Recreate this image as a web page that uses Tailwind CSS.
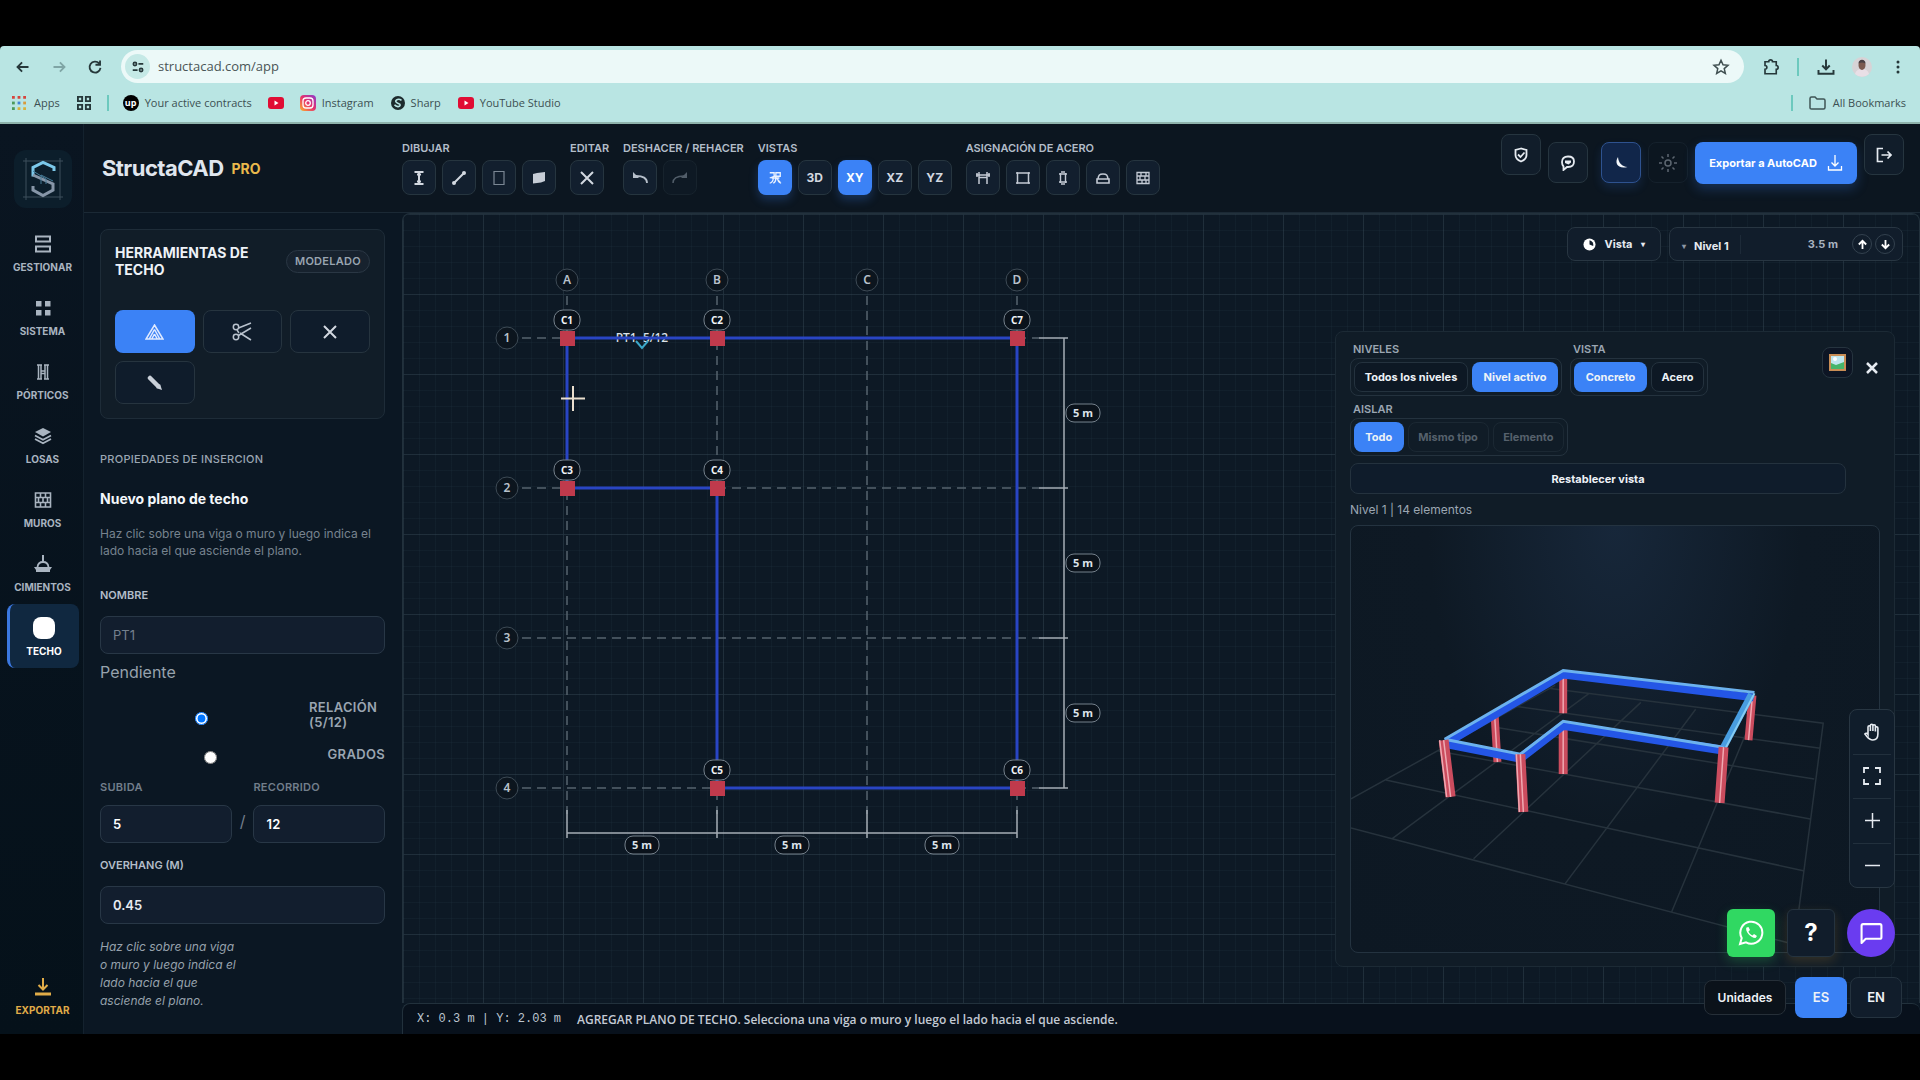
<!DOCTYPE html>
<html lang="es">
<head>
    <meta charset="UTF-8">
    <meta name="viewport" content="width=device-width, initial-scale=1.0">
    <title>StructaCAD PRO</title>
    <script src="https://cdn.jsdelivr.net/npm/@tailwindcss/browser@4"></script>
</head>
<body class="flex flex-col h-screen py-[46px] bg-black overflow-hidden font-['Inter',sans-serif] text-[#c3cad4]">

    <!-- Browser bar -->
    <div class="shrink-0 h-[78px] bg-[#b9e5e3] border-b-2 border-[#8fb3ac] rounded-t-sm text-[#3c5052] font-['Open_Sans',sans-serif]">
        <div class="flex items-center h-[41px] pl-3 pr-3">
            <div class="flex items-center gap-[14px] w-[109px] text-[#26383a]">
                <button aria-label="Atrás"><svg class="size-[22px]" viewBox="0 0 24 24" fill="none" stroke="currentColor" stroke-width="2"><path d="M18 12H6M11 7l-5 5 5 5"/></svg></button>
                <button aria-label="Adelante" class="text-[#7fa5a5]"><svg class="size-[22px]" viewBox="0 0 24 24" fill="none" stroke="currentColor" stroke-width="2"><path d="M6 12h12M13 7l5 5-5 5"/></svg></button>
                <button aria-label="Recargar"><svg class="size-[22px]" viewBox="0 0 24 24" fill="none" stroke="currentColor" stroke-width="2"><path d="M16.500 8A6 6 0 1 0 18 13M17.500 5v4.500h-5"/></svg></button>
            </div>
            <div class="flex flex-1 items-center h-[33px] rounded-full bg-[#ecf9f8] pl-1 pr-[14px]">
                <span class="flex items-center justify-center size-[25px] rounded-full bg-[#c5e9e6] text-[#26383a]">
                    <svg class="size-[14px]" viewBox="0 0 16 16" fill="none" stroke="currentColor" stroke-width="2"><circle cx="4.500" cy="4.500" r="1.800"/><path d="M8.500 4.500H14M2 11.500h5.500"/><circle cx="11.500" cy="11.500" r="1.800"/></svg>
                </span>
                <input aria-label="Dirección" value="structacad.com/app" class="flex-1 ml-2 bg-transparent outline-none text-[13px] text-[#4a5556]">
                <svg class="size-[18px]" viewBox="0 0 24 24" fill="none" stroke="#3f4f50" stroke-width="2"><path d="m12 3 2.700 6.100 6.600.6-5 4.400 1.500 6.500L12 17.200l-5.800 3.400 1.500-6.500-5-4.400 6.600-.6z"/></svg>
            </div>
            <div class="flex items-center ml-[18px] text-[#26383a]">
                <svg class="size-[18px]" viewBox="0 0 24 24" fill="none" stroke="currentColor" stroke-width="2.200"><path d="M4 5h5a2.500 2.500 0 0 1 5 0h5v5a2.500 2.500 0 0 1 0 5v6H4v-6a2.500 2.500 0 0 0 0-5z"/></svg>
                <span class="w-[2px] h-[18px] ml-[17px] mr-[18px] bg-[#6cc9be]"></span>
                <svg class="size-[18px]" viewBox="0 0 24 24" fill="none" stroke="currentColor" stroke-width="2.600"><path d="M12 2v13M7 10l5 5 5-5M2 16v5h20v-5"/></svg>
                <svg class="size-5 ml-[17px]" viewBox="0 0 20 20"><circle cx="10" cy="10" r="10" fill="#d7d3d6"/><path d="M3 17c1-4 4-5 7-5s6 1 7 5a10 10 0 0 1-14 0z" fill="#e9dfe6"/><ellipse cx="10" cy="8" rx="3.500" ry="5" fill="#7c5a50"/><path d="M6.500 6.500c0-5 7-5 7 0-2-1.500-5-1.500-7 0z" fill="#4a4044"/></svg>
                <button aria-label="Menú" class="ml-4"><svg class="size-5" viewBox="0 0 20 20" fill="currentColor"><circle cx="10" cy="5" r="1.500"/><circle cx="10" cy="10" r="1.500"/><circle cx="10" cy="15" r="1.500"/></svg></button>
            </div>
        </div>
        <div class="flex items-center h-8 pl-3 pr-[14px] text-[11px]">
            <svg class="size-[14px]" viewBox="0 0 15 15"><g fill="#d6453d"><path d="M0 0h3v3H0zM6 0h3v3H6zM12 0h3v3h-3z"/></g><path d="M0 6h3v3H0z" fill="#4b9a5b"/><path d="M6 6h3v3H6z" fill="#4284d8"/><path d="M12 6h3v3h-3z" fill="#d89b3c"/><path d="M0 12h3v3H0z" fill="#4b9a5b"/><path d="M6 12h3v3H6zM12 12h3v3h-3z" fill="#d8b23c"/></svg>
            <a href="#" class="ml-2">Apps</a>
            <svg class="size-[14px] ml-[17px]" viewBox="0 0 15 15" fill="none" stroke="#26383a" stroke-width="2"><path d="M1 1h4.500v4.500H1zM9.500 1H14v4.500H9.500zM1 9.500h4.500V14H1zM9.500 9.500H14V14H9.500z"/></svg>
            <span class="w-[2px] h-4 ml-4 mr-[14px] bg-[#6cc9be]"></span>
            <span class="flex items-center justify-center size-4 rounded-full bg-black text-white text-[9px] font-bold">up</span>
            <a href="#" class="ml-[6px]">Your active contracts</a>
            <svg class="w-4 h-3 ml-4" viewBox="0 0 16 12"><rect width="16" height="12" rx="3" fill="#e00d34"/><path d="m6.500 3.500 4 2.500-4 2.500z" fill="#fff"/></svg>
            <svg class="size-4 ml-4" viewBox="0 0 16 16"><defs><linearGradient id="ig" x1="0" y1="1" x2="1" y2="0"><stop offset="0" stop-color="#fdb52a"/><stop offset=".5" stop-color="#e6316c"/><stop offset="1" stop-color="#8a3bd0"/></linearGradient></defs><rect width="16" height="16" rx="4" fill="url(#ig)"/><g fill="none" stroke="#fff" stroke-width="1.300"><rect x="3" y="3" width="10" height="10" rx="3"/><circle cx="8" cy="8" r="2.300"/></g></svg>
            <a href="#" class="ml-[6px]">Instagram</a>
            <svg class="size-[14px] ml-[17px]" viewBox="0 0 16 16"><circle cx="8" cy="8" r="8" fill="#1d2b2d"/><path d="M12 5C9 2.500 5 4 5.500 6.500S11 8 10.500 10.500 6 12.500 4 10" fill="none" stroke="#b9e5e3" stroke-width="1.800"/></svg>
            <a href="#" class="ml-[6px]">Sharp</a>
            <svg class="w-4 h-3 ml-[17px]" viewBox="0 0 16 12"><rect width="16" height="12" rx="3" fill="#e00d34"/><path d="m6.500 3.500 4 2.500-4 2.500z" fill="#fff"/></svg>
            <a href="#" class="ml-[6px]">YouTube Studio</a>
            <span class="w-[2px] h-4 ml-auto mr-4 bg-[#6cc9be]"></span>
            <svg class="w-[17px] h-[14px]" viewBox="0 0 17 14" fill="none" stroke="#3f5556" stroke-width="1.500"><path d="M1 12V2.500Q1 1 2.500 1H6l2 2h6.500Q16 3 16 4.500v7Q16 13 14.500 13h-12Q1 13 1 12z"/></svg>
            <a href="#" class="ml-[7px]">All Bookmarks</a>
        </div>
    </div>

    <div class="flex flex-1 min-h-0 bg-[#0b1723]">

        <!-- Left navigation -->
        <nav class="flex flex-col items-center shrink-0 w-[84px] pt-[26px] pb-4 pl-[2px] border-r border-[#14222e] bg-linear-to-b from-[#0a1521] to-[#05111a] text-[10px] leading-4 font-bold text-[#a9b4c0]">
            <div class="flex items-center justify-center w-[58px] h-[58px] rounded-xl bg-[#0c1e2b]">
                <svg class="w-10 h-[42px]" viewBox="0 0 40 42" fill="none"><path d="M3 0v42M37 0v42M0 3h40M0 39h40" stroke="#3c4f5d"/><path d="M31 13V9.500L20 4.500 10 9.500v9" stroke="#7cc8ea" stroke-width="3"/><path d="m10 17 20 9v6l-10 5.500L10 32v-4" stroke="#8796a8" stroke-width="3"/><path d="m10 13 13 8v5M18 26v-9l12 6" stroke="#467b97"/></svg>
            </div>
            <div class="flex flex-col mt-3 w-[72px]">
                <a href="#" class="flex flex-col items-center gap-[6px] h-16 pt-[15px]">
                    <svg class="size-[18px]" viewBox="0 0 18 18" fill="none" stroke="currentColor" stroke-width="2"><path d="M2 1.500h14v5H2zM2 11.500h14v5H2z"/></svg>
                    GESTIONAR
                </a>
                <a href="#" class="flex flex-col items-center gap-[6px] h-16 pt-[15px]">
                    <svg class="size-[18px]" viewBox="0 0 18 18" fill="currentColor"><path d="M2 2h5.500v5.500H2zM11 2h5.500v5.500H11zM2 11h5.500v5.500H2zM11 11h5.500v5.500H11z"/></svg>
                    SISTEMA
                </a>
                <a href="#" class="flex flex-col items-center gap-[6px] h-16 pt-[15px]">
                    <svg class="size-[18px]" viewBox="0 0 18 18" fill="none" stroke="currentColor" stroke-width="1.500"><path d="M3 2h5M3 16h5M10 2h5M10 16h5M4.500 2v14M7 2v14M11 2v14M13.500 2v14M7 8h4M7 10.500h4"/></svg>
                    PÓRTICOS
                </a>
                <a href="#" class="flex flex-col items-center gap-[6px] h-16 pt-[15px]">
                    <svg class="size-[18px]" viewBox="0 0 18 18" fill="none" stroke="currentColor" stroke-width="1.800"><path d="m9 1 8 4-8 4.500L1 5z" fill="currentColor" stroke="none"/><path d="m1 8.500 8 4.200 8-4.200M1 12l8 4.200 8-4.200"/></svg>
                    LOSAS
                </a>
                <a href="#" class="flex flex-col items-center gap-[6px] h-16 pt-[15px]">
                    <svg class="size-[18px]" viewBox="0 0 18 18" fill="none" stroke="currentColor" stroke-width="1.600"><path d="M1.500 2h15v14h-15zM1.500 6.500h15M1.500 11.500h15M6.500 2v4.500M11.500 2v4.500M4.500 6.500v5M9 6.500v5M13.500 6.500v5M6.500 11.500V16M11.500 11.500V16"/></svg>
                    MUROS
                </a>
                <a href="#" class="flex flex-col items-center gap-[6px] h-16 pt-[15px]">
                    <svg class="size-[18px]" viewBox="0 0 18 18"><path d="M9 0v7" stroke="currentColor" stroke-width="2"/><path d="M3.500 12c.5-4 2.500-5 5.500-5s5 1 5.500 5" stroke="currentColor" stroke-width="1.800" fill="none"/><path d="M0 12h18l-2 3v2H2v-2z" fill="currentColor"/></svg>
                    CIMIENTOS
                </a>
                <a href="#" class="flex flex-col items-center gap-1 h-16 pt-[13px] rounded-lg border-l-3 border-[#3b78e0] bg-[#102840] text-white">
                    <span class="size-[22px] rounded-lg bg-white"></span>
                    TECHO
                </a>
            </div>
            <a href="#" class="flex flex-col items-center gap-[6px] mt-auto text-[#e0ac48]">
                <svg class="size-[18px]" viewBox="0 0 18 18" fill="none" stroke="currentColor" stroke-width="2"><path d="M9 0v11M4.500 7 9 11.500 13.500 7"/><path d="M1 16h16" stroke-width="3"/></svg>
                EXPORTAR
            </a>
        </nav>

        <div class="flex flex-col flex-1 min-w-0">

            <!-- Header -->
            <header class="flex shrink-0 h-[89px] pl-[18px] pr-4 bg-[#0c1620] border-b border-[#1b2935]">
                <div class="flex items-center gap-2 w-[300px] pt-px">
                    <h1 class="text-[22px] font-bold tracking-tight text-[#e0e6ee]">StructaCAD</h1>
                    <span class="text-sm font-bold text-[#eab94c]">PRO</span>
                </div>

                <div class="flex gap-[14px] pt-4 text-[11px] leading-4 font-semibold text-[#b3bdc9]">
                    <div class="flex flex-col gap-1">
                        <span>DIBUJAR</span>
                        <div class="flex gap-[6px]">
                            <button aria-label="Columna" class="flex items-center justify-center w-[34px] h-[35px] rounded-lg border border-[#26353f] bg-[#121f2e]"><svg class="size-4" viewBox="0 0 16 16" fill="none" stroke="#d2d8e0" stroke-width="2"><path d="M3.500 2h9M3.500 14h9M8 2v12M6 4.500h4M6 11.500h4"/></svg></button>
                            <button aria-label="Viga" class="flex items-center justify-center w-[34px] h-[35px] rounded-lg border border-[#26353f] bg-[#121f2e]"><svg class="size-4" viewBox="0 0 16 16" stroke="#d2d8e0" fill="#d2d8e0" stroke-width="2"><path d="M3 13 13 3"/><circle cx="3" cy="13" r="1"/><circle cx="13" cy="3" r="1"/></svg></button>
                            <button aria-label="Muro" class="flex items-center justify-center w-[34px] h-[35px] rounded-lg border border-[#26353f] bg-[#121f2e]"><svg class="size-4" viewBox="0 0 16 16" fill="none" stroke="#7b8794" stroke-width="1.200"><path d="M3 1.500h10v13H3z"/></svg></button>
                            <button aria-label="Losa" class="flex items-center justify-center w-[34px] h-[35px] rounded-lg border border-[#26353f] bg-[#121f2e]"><svg class="size-4" viewBox="0 0 16 16" fill="#c6cdd6"><path d="m2 4 4-1 8-1v9l-4 1.500-8 1z"/></svg></button>
                        </div>
                    </div>
                    <div class="flex flex-col gap-1 w-[39px]">
                        <span>EDITAR</span>
                        <button aria-label="Borrar" class="flex items-center justify-center w-[34px] h-[35px] rounded-lg border border-[#26353f] bg-[#121f2e]"><svg class="size-4" viewBox="0 0 16 16" stroke="#d2d8e0" stroke-width="2"><path d="m2 2 12 12M14 2 2 14"/></svg></button>
                    </div>
                    <div class="flex flex-col gap-1">
                        <span>DESHACER / REHACER</span>
                        <div class="flex gap-[6px]">
                            <button aria-label="Deshacer" class="flex items-center justify-center w-[34px] h-[35px] rounded-lg border border-[#26353f] bg-[#121f2e]"><svg class="size-4" viewBox="0 0 16 16" fill="none" stroke="#b6bfca" stroke-width="1.800"><path d="M15 13c0-5-4-7-11-7"/><path d="M1 2v6h6z" fill="#b6bfca" stroke="none"/></svg></button>
                            <button aria-label="Rehacer" disabled class="flex items-center justify-center w-[34px] h-[35px] rounded-lg border border-[#17232d] bg-[#0e1924]"><svg class="size-4" viewBox="0 0 16 16" fill="none" stroke="#515d69" stroke-width="1.500"><path d="M1 13c0-5 4-7 11-7"/><path d="M15 2v6H9z" fill="#515d69" stroke="none"/></svg></button>
                        </div>
                    </div>
                    <div class="flex flex-col gap-1">
                        <span>VISTAS</span>
                        <div class="flex gap-[6px] text-xs font-bold text-[#d2d8e0]">
                            <button aria-label="Vista libre" class="flex items-center justify-center w-[34px] h-[35px] rounded-lg bg-[#3b82f6] shadow-[0_5px_10px_#3b82f640]"><svg class="size-[14px]" viewBox="0 0 16 16" fill="none" stroke="#e8f1ff" stroke-width="1.500"><path d="M2 2h5v4L2 8M9 1v7M9 2h5v4H9M7 5l7 8M4 8h9M6 8c0 3-1 5-4 6M9 8c0 3-1 5-3 6M11 8c0 3 1 5 4 6"/></svg></button>
                            <button class="flex items-center justify-center w-[34px] h-[35px] rounded-lg border border-[#26353f] bg-[#121f2e]">3D</button>
                            <button class="flex items-center justify-center w-[34px] h-[35px] rounded-lg bg-[#3b82f6] text-white shadow-[0_5px_10px_#3b82f640]">XY</button>
                            <button class="flex items-center justify-center w-[34px] h-[35px] rounded-lg border border-[#26353f] bg-[#121f2e]">XZ</button>
                            <button class="flex items-center justify-center w-[34px] h-[35px] rounded-lg border border-[#26353f] bg-[#121f2e]">YZ</button>
                        </div>
                    </div>
                    <div class="flex flex-col gap-1">
                        <span>ASIGNACIÓN DE ACERO</span>
                        <div class="flex gap-[6px] text-[#c3cad4]">
                            <button aria-label="Acero en vigas" class="flex items-center justify-center w-[34px] h-[35px] rounded-lg border border-[#26353f] bg-[#121f2e]"><svg class="size-[14px]" viewBox="0 0 14 14" fill="none" stroke="currentColor" stroke-width="1.500"><path d="M0 4h14M3 1v12M11 1v12M3 6.500h8M1 2v4M13 2v4"/></svg></button>
                            <button aria-label="Acero en secciones" class="flex items-center justify-center w-[34px] h-[35px] rounded-lg border border-[#26353f] bg-[#121f2e]"><svg class="size-[14px]" viewBox="0 0 14 14" fill="none" stroke="currentColor" stroke-width="1.500"><path d="M1.500 2h11v10h-11z"/><path d="M0 2h2M12 2h2M0 12h2M12 12h2"/></svg></button>
                            <button aria-label="Acero en columnas" class="flex items-center justify-center w-[34px] h-[35px] rounded-lg border border-[#26353f] bg-[#121f2e]"><svg class="size-[14px]" viewBox="0 0 14 14" fill="none" stroke="currentColor" stroke-width="1.400"><path d="M4.500 2v10M9.500 2v10M3 3h8M3 11h8M5 1h4M5 13h4"/></svg></button>
                            <button aria-label="Acero en zapatas" class="flex items-center justify-center w-[34px] h-[35px] rounded-lg border border-[#26353f] bg-[#121f2e]"><svg class="size-[14px]" viewBox="0 0 14 14" fill="none" stroke="currentColor" stroke-width="1.600"><path d="M2 8c.5-4 1.500-5 5-5s4.500 1 5 5"/><path d="M1 8h12v4H1z"/></svg></button>
                            <button aria-label="Acero en muros" class="flex items-center justify-center w-[34px] h-[35px] rounded-lg border border-[#26353f] bg-[#121f2e]"><svg class="size-[14px]" viewBox="0 0 14 14" fill="none" stroke="currentColor" stroke-width="1.300"><path d="M1 1.500h12v11H1zM1 5h12M1 9h12M5 1.500V5M9 5v4M4 5v4M6 9v3.500M10 9v3.500M10 1.500V5"/></svg></button>
                        </div>
                    </div>
                </div>

                <div class="flex items-start gap-[7px] pt-[10px] ml-auto text-[#e6ebf1]">
                    <button aria-label="Seguridad" class="flex items-center justify-center w-10 h-[41px] rounded-lg border border-[#26353f] bg-[#111d2a]"><svg class="size-4" viewBox="0 0 16 16" fill="none" stroke="currentColor" stroke-width="1.800"><path d="M8 1.500 2.500 3v5c0 3.500 3 5.500 5.500 6.500 2.500-1 5.500-3 5.500-6.500V3z"/><path d="m5 7.500 2.500 2.500 4-4.500"/></svg></button>
                    <button aria-label="Comentarios" class="flex items-center justify-center w-10 h-[41px] mt-2 rounded-lg border border-[#26353f] bg-[#111d2a]"><svg class="size-4" viewBox="0 0 16 16" fill="none" stroke="currentColor" stroke-width="1.800"><path d="M3.500 15v-3.500C2.500 10.500 2 9 2 7c0-3.500 2-5.500 6-5.500s6 2 6 5-2 5.500-6 5.500H7z"/><path d="M5 5.500h6v2L8.500 9.500 5 8z" fill="currentColor" stroke="none"/></svg></button>
                    <button aria-label="Modo oscuro" class="flex items-center justify-center w-10 h-[41px] mt-2 ml-[6px] rounded-lg border border-[#2e528f] bg-[#11264a] shadow-[0_5px_10px_#3b82f626]"><svg class="size-4" viewBox="0 0 16 16" fill="#f4f7fb"><path d="M5 2C1 8 5 14.500 14.500 12 9 11.500 5.500 8 5 2z"/></svg></button>
                    <button aria-label="Modo claro" class="flex items-center justify-center w-10 h-[41px] mt-2 rounded-lg border border-[#15212c] text-[#5d6771]"><svg class="size-[18px]" viewBox="0 0 18 18" fill="none" stroke="currentColor" stroke-width="1.500"><circle cx="9" cy="9" r="3"/><path d="M9 0v3M9 15v3M0 9h3M15 9h3M2.500 2.500l2 2M13.500 13.500l2 2M15.500 2.500l-2 2M4.500 13.500l-2 2"/></svg></button>
                    <button class="flex items-center justify-center gap-[10px] w-[162px] h-[42px] mt-2 rounded-lg bg-[#3b82f6] text-[11px] font-bold text-white shadow-[0_5px_12px_#3b82f640]">Exportar a AutoCAD
                        <svg class="size-4" viewBox="0 0 16 16" fill="none" stroke="currentColor" stroke-width="1.300"><path d="M8 0v11M4.500 7.500 8 11l3.500-3.500M1.500 11v4h13v-4"/></svg>
                    </button>
                    <button aria-label="Salir" class="flex items-center justify-center w-10 h-[41px] rounded-lg border border-[#26353f] bg-[#111d2a]"><svg class="size-4" viewBox="0 0 16 16" fill="none" stroke="currentColor" stroke-width="1.700"><path d="M7 1.500H1.500v13H7M5.500 8H15M11.500 4.500 15 8l-3.500 3.500"/></svg></button>
                </div>
            </header>

            <div class="flex flex-1 min-h-0">

                <!-- Roof properties -->
                <aside class="flex flex-col shrink-0 w-[318px] pt-4 pl-4 pr-[17px] text-xs">
                    <section class="h-[190px] rounded-lg border border-[#1e2c38] bg-[#111d28] p-[14px]">
                        <div class="flex items-center justify-between">
                            <h2 class="w-[150px] text-sm leading-[17px] font-bold text-[#eef2f7]">HERRAMIENTAS DE TECHO</h2>
                            <span class="flex items-center h-[23px] px-2 rounded-full border border-[#2a3744] bg-[#17222e] text-[11px] font-semibold tracking-wide text-[#9aa5b1]">MODELADO</span>
                        </div>
                        <div class="grid grid-cols-3 gap-2 mt-8">
                            <button aria-label="Plano de techo" class="flex items-center justify-center h-[43px] rounded-lg bg-[#3b82f6]"><svg class="w-[19px] h-4" viewBox="0 0 19 16" fill="none" stroke="#dfeaff" stroke-width="1.500"><path d="M9.500 1 18 15H1zM9.500 5.500l5 9M9.500 5.500l-5 9M9.500 10 12 14.500M9.500 10 7 14.500"/></svg></button>
                            <button aria-label="Recortar" class="flex items-center justify-center h-[43px] rounded-lg border border-[#26343f] bg-[#0f1c2b]"><svg class="size-5" viewBox="0 0 20 20" fill="none" stroke="#b9c2cd" stroke-width="1.500"><circle cx="4" cy="5" r="2.700"/><circle cx="4" cy="15" r="2.700"/><path d="M6.500 6 19 1M6.500 13.500 19 6M8 11l11 7M5 8l2 3"/></svg></button>
                            <button aria-label="Eliminar" class="flex items-center justify-center h-[43px] rounded-lg border border-[#26343f] bg-[#0f1c2b]"><svg class="size-[14px]" viewBox="0 0 14 14" stroke="#d2d8e0" stroke-width="2"><path d="m1 1 12 12M13 1 1 13"/></svg></button>
                            <button aria-label="Editar" class="flex items-center justify-center h-[43px] rounded-lg border border-[#26343f] bg-[#0f1c2b]"><svg class="size-4" viewBox="0 0 16 16"><path d="m3 3 8 8" stroke="#c9d0d9" stroke-width="4.500" stroke-linecap="round"/><path d="m9 13 4-4 2 6z" fill="#c9d0d9"/></svg></button>
                        </div>
                    </section>

                    <p class="mt-8 text-[11px] font-medium tracking-wide leading-4 text-[#9ba6b2]">PROPIEDADES DE INSERCION</p>
                    <h3 class="mt-[22px] text-sm leading-5 font-bold text-[#f4f7fb]">Nuevo plano de techo</h3>
                    <p class="mt-4 leading-[17px] text-[#77838f]">Haz clic sobre una viga o muro y luego indica el lado hacia el que asciende el plano.</p>

                    <label for="nombre" class="mt-7 text-[11px] leading-4 font-semibold text-[#b3bdc9]">NOMBRE</label>
                    <input id="nombre" placeholder="PT1" class="h-[38px] mt-[13px] px-3 rounded-lg border border-[#283746] bg-[#121e2e] text-[13px] placeholder-[#75808d]">

                    <fieldset class="flex flex-col">
                        <legend class="pt-[6px] text-base leading-6 text-[#97a2ad]">Pendiente</legend>
                        <label class="flex items-center gap-[6px] mt-4 text-[13px] leading-[15px] font-semibold tracking-wide text-[#9aa5b1]">
                            <span class="flex flex-1 justify-center"><input type="radio" name="pendiente" checked class="size-[13px] mt-[6px]"></span>
                            <span class="w-[76px]">RELACIÓN (5/12)</span>
                        </label>
                        <label class="flex items-center gap-[6px] mt-[15px] text-[13px] leading-[15px] font-semibold tracking-wide text-[#9aa5b1]">
                            <span class="flex flex-1 justify-center"><input type="radio" name="pendiente" class="size-[13px] mt-[6px]"></span>
                            GRADOS
                        </label>
                    </fieldset>

                    <div class="flex items-end gap-2 mt-[15px] text-[11px] leading-4 font-semibold text-[#727e8b]">
                        <label class="flex-1 tracking-wide">SUBIDA
                            <input value="5" class="block w-full h-[38px] mt-[10px] px-3 rounded-lg border border-[#283746] bg-[#121e2e] text-[13px] text-white">
                        </label>
                        <span class="pb-[10px] text-base font-normal">/</span>
                        <label class="flex-1 tracking-wide">RECORRIDO
                            <input value="12" class="block w-full h-[38px] mt-[10px] px-3 rounded-lg border border-[#283746] bg-[#121e2e] text-[13px] text-white">
                        </label>
                    </div>

                    <label for="overhang" class="mt-[14px] text-[11px] leading-4 font-semibold text-[#b3bdc9]">OVERHANG (M)</label>
                    <input id="overhang" value="0.45" class="h-[38px] mt-[13px] px-3 rounded-lg border border-[#283746] bg-[#121e2e] text-[13px] font-semibold text-[#e6ebf1]">
                    <p class="w-[140px] mt-[14px] leading-[18px] italic text-[#97a2ad]">Haz clic sobre una viga o muro y luego indica el lado hacia el que asciende el plano.</p>
                </aside>

                <!-- Drawing area -->
                <main class="flex flex-col flex-1 min-w-0">
                    <div class="relative flex-1 min-h-0 rounded-t-lg border-l border-t border-r border-[#22313c] bg-[#0d1925] overflow-hidden">
                        <div class="absolute inset-0 bg-[linear-gradient(#1b2935_1px,transparent_1px),linear-gradient(90deg,#1b2935_1px,transparent_1px)] bg-[size:80px_80px]"></div>
                        <div class="absolute inset-0 bg-[linear-gradient(#6a8ca00e_1px,transparent_1px),linear-gradient(90deg,#6a8ca00e_1px,transparent_1px)] bg-[size:16px_16px]"></div>

                        <!-- Structural plan, 150px per 5 m bay -->
                        <svg class="absolute inset-0 size-full font-['Noto_Sans',sans-serif]" text-anchor="middle">
                            <g id="axes" stroke="#56636e" stroke-width="1.500" fill="none"></g>
                            <text x="239" y="128" font-size="12" font-weight="500" fill="#dde3ea" xml:space="preserve">PT1  5/12</text>
                            <path d="M164 124H614V574H314V274H164Z" fill="none" stroke="#2945c3" stroke-width="3"/>
                            <path d="m233 127 6 7 6-7" fill="none" stroke="#3ba7c9" stroke-width="2"/>
                            <g stroke="#a5adb5" stroke-width="1.500" fill="none">
                                <path d="M164 619H614M164 596V624M314 596V624M464 596V624M614 596V624"/>
                                <path d="M661 124V574M636 124H665M636 274H665M636 424H665M636 574H665"/>
                            </g>
                            <g id="labels" font-weight="600"></g>
                            <path d="M170 172V197M158 184.500H182" stroke="#eadfce" stroke-width="2"/>
                        </svg>

                        <!-- View and level -->
                        <div class="absolute top-[13px] right-4 flex gap-2 text-[11px] leading-4 font-bold text-[#e6ebf1]">
                            <button class="flex items-center justify-center gap-[9px] w-[94px] h-[34px] rounded-lg border border-[#283642] bg-[#111d2b]">
                                <svg class="size-[13px]" viewBox="0 0 14 14"><circle cx="7" cy="7" r="6.500" fill="#fff"/><path d="M7 2.500V7l4 1.500A5 5 0 0 0 7 2.500z" fill="#111d2b"/></svg>
                                Vista
                                <span class="text-[8px]">▾</span>
                            </button>
                            <div class="flex items-center w-[234px] h-[34px] pl-3 pr-[7px] rounded-lg border border-[#283642] bg-[#111d2b]">
                                <button class="flex items-center gap-2 pr-[11px] pt-[3px] border-r border-[#1d2a38]"><span class="text-[8px] text-[#8c97a3]">▾</span>Nivel 1</button>
                                <span class="ml-auto mr-[14px] text-[#a9b4c0]">3.5 m</span>
                                <button aria-label="Subir nivel" class="flex items-center justify-center size-5 mr-[3px] rounded-full border border-[#33414e]"><svg class="size-[11px]" viewBox="0 0 12 12" fill="none" stroke="#fff" stroke-width="2"><path d="M6 11V2M2 6l4-4 4 4"/></svg></button>
                                <button aria-label="Bajar nivel" class="flex items-center justify-center size-5 rounded-full border border-[#33414e]"><svg class="size-[11px]" viewBox="0 0 12 12" fill="none" stroke="#fff" stroke-width="2"><path d="M6 1v9M2 6l4 4 4-4"/></svg></button>
                            </div>
                        </div>

                        <!-- 3D preview window -->
                        <section class="absolute top-[117px] right-6 bottom-9 flex flex-col w-[560px] px-[14px] pt-[10px] pb-[13px] rounded-lg border border-[#1c2a35] bg-[#101c27] text-[11px] leading-4 font-bold text-[#eef2f7]">
                            <div class="flex -mr-[5px]">
                                <div>
                                    <div class="flex gap-2">
                                        <div>
                                            <p class="pl-[3px] leading-[14px] font-semibold text-[#9ba6b2]">NIVELES</p>
                                            <div class="flex gap-1 h-[38px] mt-[2px] p-[3px] rounded-lg border border-[#24323e]">
                                                <button class="w-[114px] rounded-lg border border-[#24323e] bg-[#0d1824]">Todos los niveles</button>
                                                <button class="w-[86px] rounded-lg bg-[#3b82f6]">Nivel activo</button>
                                            </div>
                                        </div>
                                        <div>
                                            <p class="pl-[3px] leading-[14px] font-semibold text-[#9ba6b2]">VISTA</p>
                                            <div class="flex gap-1 h-[38px] mt-[2px] p-[3px] rounded-lg border border-[#24323e]">
                                                <button class="w-[73px] rounded-lg bg-[#3b82f6]">Concreto</button>
                                                <button class="w-[53px] rounded-lg border border-[#24323e] bg-[#0d1824]">Acero</button>
                                            </div>
                                        </div>
                                    </div>
                                    <p class="mt-[6px] pl-[3px] leading-[14px] font-semibold text-[#9ba6b2]">AISLAR</p>
                                    <div class="flex gap-1 w-[218px] h-[38px] mt-[2px] p-[3px] rounded-lg border border-[#24323e]">
                                        <button class="w-[50px] rounded-lg bg-[#3b82f6]">Todo</button>
                                        <button disabled class="w-[82px] rounded-lg border border-[#1b2833] text-[#56616c]">Mismo tipo</button>
                                        <button disabled class="w-[72px] rounded-lg border border-[#1b2833] text-[#56616c]">Elemento</button>
                                    </div>
                                </div>
                                <button aria-label="Imagen" class="flex items-center justify-center size-[31px] mt-[5px] ml-auto rounded-lg border border-[#26343f] bg-[#0d1524]"><svg class="size-[17px]" viewBox="0 0 17 17"><rect width="17" height="17" fill="#c98d55"/><path d="M2 2h13v13H2z" fill="#bfe6ef"/><path d="m2 9 5 2 8-3v7H2z" fill="#45b56b"/><circle cx="6" cy="5" r="2" fill="#fff"/></svg></button>
                                <button aria-label="Cerrar" class="w-[26px] h-10 mt-[6px] ml-[6px] flex items-center justify-center"><svg class="size-3" viewBox="0 0 12 12" stroke="#e6ebf1" stroke-width="2.500"><path d="m1 1 10 10M11 1 1 11"/></svg></button>
                            </div>
                            <button class="h-[31px] mt-[7px] mr-[34px] shrink-0 rounded-lg border border-[#24323e] bg-[#0f1c2b]">Restablecer vista</button>
                            <p class="mt-2 text-xs leading-[15px] font-normal text-[#9ba6b2]">Nivel 1 | 14 elementos</p>
                            <div class="relative flex-1 min-h-0 mt-2 rounded-lg border border-[#243340] bg-[radial-gradient(ellipse_at_50%_0%,#17273a_0%,#0e1924_50%,#0d1823_100%)] overflow-hidden">
                                <svg class="size-full" viewBox="0 0 530 430" preserveAspectRatio="xMidYMin slice" fill="none">
                                    <path stroke="#26323c" stroke-width="1.500" d="M0 274 205 160M0 303 445 420 474 198 200 163M150 179 471 223M145 202 465 254M88 226 461 294M35 255 454 346M41 314 239 168M123 334 291 177M215 359 346 184M322 387 404 190"/>
                                    <path d="M213 150v38M144 187l3 50M403 170l-4 45" stroke="#cb4c5e" stroke-width="8"/>
                                    <path d="M213 150v38M144 187l3 50M403 170l-4 45" stroke="#efa9b2" stroke-width="1.500"/>
                                    <path d="M96 218 213 149 404 172" stroke="#2456e6" stroke-width="8"/>
                                    <path d="M94 214 213 145 405 167" stroke="#6cb2ee" stroke-width="3"/>
                                    <path d="m402 169-28 53" stroke="#489de0" stroke-width="7"/>
                                    <path d="m405 168-29 55" stroke="#86ccf2" stroke-width="2"/>
                                    <path d="M213 201v48" stroke="#cb4c5e" stroke-width="9"/>
                                    <path d="M213 201v48" stroke="#efa9b2" stroke-width="1.500"/>
                                    <path d="m98 219 72 14 43-33 160 25" stroke="#2456e6" stroke-width="9"/>
                                    <path d="m94 214 76 15 43-33 161 26" stroke="#6cb2ee" stroke-width="3"/>
                                    <path d="m93 215 7 57M170 229l3 58M374 222l-4 56" stroke="#cb4c5e" stroke-width="10"/>
                                    <path d="m93 215 7 57M170 229l3 58M374 222l-4 56M89 215l7 57M166 229l3 58" stroke="#efa9b2" stroke-width="1.500"/>
                                </svg>
                            </div>
                        </section>

                        <!-- Zoom tools -->
                        <div class="absolute right-6 bottom-[115px] flex flex-col w-[46px] h-[179px] px-[3px] rounded-lg border border-[#283642] bg-[#101d2b] text-[#e6ebf1] divide-y divide-[#22303d]">
                            <button aria-label="Mover" class="flex flex-1 items-center justify-center"><svg class="size-[18px]" viewBox="0 0 18 18" fill="none" stroke="currentColor" stroke-width="1.600"><path d="M5 9V4a1.200 1.200 0 0 1 2.400 0v4V2.500a1.200 1.200 0 0 1 2.500 0V8 3a1.200 1.200 0 0 1 2.500 0v5.500V5a1.200 1.200 0 0 1 2.500 0v6c0 4-2 6-5 6-4 0-5-2.500-8-6 1-1.500 2.500-.5 3.100.5z"/></svg></button>
                            <button aria-label="Encuadrar" class="flex flex-1 items-center justify-center"><svg class="size-[18px]" viewBox="0 0 18 18" fill="none" stroke="currentColor" stroke-width="1.800"><path d="M1 6V1h5M12 1h5v5M17 12v5h-5M6 17H1v-5"/></svg></button>
                            <button aria-label="Acercar" class="flex flex-1 items-center justify-center"><svg class="size-[15px]" viewBox="0 0 15 15" stroke="currentColor" stroke-width="1.500"><path d="M7.500 0v15M0 7.500h15"/></svg></button>
                            <button aria-label="Alejar" class="flex flex-1 items-center justify-center"><svg class="size-[15px]" viewBox="0 0 15 15" stroke="currentColor" stroke-width="1.500"><path d="M0 7.500h15"/></svg></button>
                        </div>

                        <!-- Floating help buttons -->
                        <div class="absolute right-6 bottom-[46px] flex gap-3 text-white">
                            <a href="#" aria-label="WhatsApp" class="flex items-center justify-center size-12 rounded-md bg-[#30d862] shadow-[0_4px_12px_#30d86240]"><svg class="size-[26px]" viewBox="0 0 26 26" fill="none" stroke="#fff" stroke-width="2"><path d="m2 24 1.700-6A11 11 0 1 1 8 22.300z"/><path d="M8.500 7.500c-2 3 4 10.500 9 10.500l1.500-2-3-2-1.500 1.500c-2-.8-3.500-2.500-4-4L12 10l-1.500-3z" fill="#fff" stroke="none"/></svg></a>
                            <button class="size-12 rounded-md border border-[#25333f] bg-[#111d2b] text-2xl font-bold shadow-[0_4px_12px_#d8962a30]">?</button>
                            <button aria-label="Chat" class="flex items-center justify-center size-12 rounded-full bg-[#6a3cf0]"><svg class="size-[23px]" viewBox="0 0 22 22" fill="none" stroke="#fff" stroke-width="2" stroke-linejoin="round"><path d="M1.500 20V3.500Q1.500 2 3 2h16q1.500 0 1.500 1.500v11Q20.500 16 19 16H5.500z"/></svg></button>
                        </div>
                    </div>

                    <!-- Status bar -->
                    <footer class="relative flex items-center shrink-0 h-[31px] pl-[14px] pr-[18px] gap-4 rounded-t-lg border-t border-l border-[#22313c] bg-[#08111c]">
                        <span class="font-['Liberation_Mono',monospace] text-xs text-[#bcc5cf]">X: 0.3 m | Y: 2.03 m</span>
                        <span class="pt-[2px] font-['Open_Sans',sans-serif] text-xs font-semibold text-[#c3cad4]">AGREGAR PLANO DE TECHO. Selecciona una viga o muro y luego el lado hacia el que asciende.</span>
                        <div class="absolute right-[18px] bottom-4 flex items-center text-[13px] font-semibold text-[#eef2f7]">
                            <button class="w-[82px] h-[35px] mr-[9px] rounded-lg border border-[#262f38] bg-[#0b121a] text-xs">Unidades</button>
                            <button class="w-[52px] h-[41px] mr-[3px] rounded-lg bg-[#3b82f6]">ES</button>
                            <button class="w-[52px] h-[41px] rounded-lg border border-[#25333f] bg-[#111d2b]">EN</button>
                        </div>
                    </footer>
                </main>
            </div>
        </div>
    </div>

    <script>
        const xs = { A: 164, B: 314, C: 464, D: 614 };
        const ys = { 1: 124, 2: 274, 3: 424, 4: 574 };
        const columns = [['C1', 'A', 1], ['C2', 'B', 1], ['C7', 'D', 1], ['C3', 'A', 2], ['C4', 'B', 2], ['C5', 'B', 4], ['C6', 'D', 4]];

        let axes = '';
        let labels = '';

        // Axis lines and bubbles
        for (const [name, x] of Object.entries(xs)) {
            axes += `<path d="M${x} 82V600" stroke-dasharray="9 6"/>`;
            labels += `<circle cx="${x}" cy="66" r="11" fill="#0c151e" stroke="#3d4a55"/>
                <text x="${x}" y="70" font-size="12" fill="#b8c1cb">${name}</text>`;
        }
        for (const [name, y] of Object.entries(ys)) {
            axes += `<path d="M119 ${y}H636" stroke-dasharray="9 6"/>`;
            labels += `<circle cx="104" cy="${y}" r="11" fill="#0c151e" stroke="#3d4a55"/>
                <text x="104" y="${y + 4}" font-size="12" fill="#b8c1cb">${name}</text>`;
        }

        // Columns
        for (const [name, ax, row] of columns) {
            const x = xs[ax], y = ys[row];
            labels += `<rect x="${x - 7}" y="${y - 7}" width="15" height="15" fill="#c03a4c"/>
                <rect x="${x - 13}" y="${y - 28}" width="26" height="20" rx="9" fill="#0a121b" stroke="#75818c"/>
                <text x="${x}" y="${y - 14}" font-size="10" font-weight="700" fill="#f1f4f8">${name}</text>`;
        }

        // Bay dimensions
        for (const i of [0, 1, 2]) {
            for (const [x, y] of [[239 + i * 150, 631], [680, 199 + i * 150]]) {
                labels += `<rect x="${x - 17}" y="${y - 9}" width="34" height="18" rx="8" fill="#0a121b" stroke="#75818c"/>
                    <text x="${x}" y="${y + 4}" font-size="11" font-weight="700" fill="#dde3ea">5 m</text>`;
            }
        }

        document.getElementById('axes').innerHTML = axes;
        document.getElementById('labels').innerHTML = labels;
    </script>
</body>
</html>
